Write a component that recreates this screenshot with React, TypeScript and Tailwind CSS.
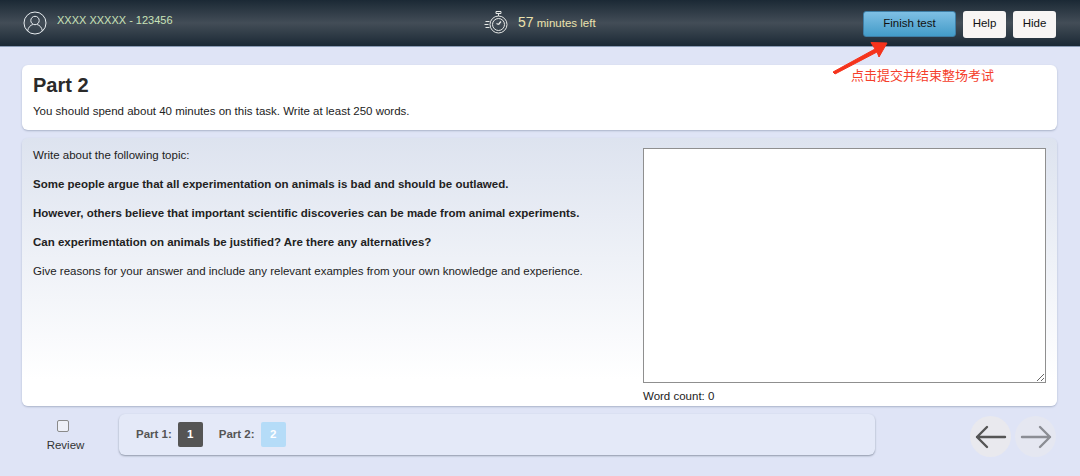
import { useState } from 'react';

const sans = 'font-["Liberation_Sans","Noto_Sans_CJK_SC",sans-serif]';

function UserIcon() {
  return (
    <svg width="24" height="24" viewBox="0 0 24 24" fill="none" stroke="#e8edf0" strokeWidth="1">
      <circle cx="12" cy="12" r="11" />
      <circle cx="12" cy="9.5" r="4.2" />
      <path d="M4.6 20c.6-3.8 3-6 5.2-6.4M19.4 20c-.6-3.8-3-6-5.2-6.4" />
    </svg>
  );
}

function TimerIcon() {
  return (
    <svg width="26" height="26" viewBox="0 0 26 26" fill="none" stroke="#e6e8e6" strokeWidth="1">
      <circle cx="14.5" cy="14.5" r="8.5" />
      <circle cx="14.5" cy="14.5" r="6" />
      <path d="M12 1.5h5V3.5h-5zM14.5 3.5V6" />
      <path d="M14.5 14.5l2.4-3M14.5 14.5l-2-1" strokeWidth="1.3" />
      <path d="M1.5 11.5h4M.5 14.5h4M1.5 17.5h4" />
    </svg>
  );
}

export default function App() {
  const [essay, setEssay] = useState('');
  const [review, setReview] = useState(false);

  return (
    <div className={`relative h-[476px] w-[1080px] overflow-hidden bg-[#dfe4f6] text-[#222] ${sans}`}>
      {/* Header */}
      <header className="flex h-[47px] items-center border-b border-[#8a9bb5] bg-[linear-gradient(#1b2935,#434d57_50%,#1b2935)] pl-[23px] pr-6">
        <div className="flex w-[461px] items-center gap-[10px] pb-[1px]">
          <UserIcon />
          <span className="mb-[5px] text-[11px] text-[#c9e2b8]">XXXX XXXXX - 123456</span>
        </div>
        <div className="flex items-center gap-[8px]">
          <TimerIcon />
          <span className="pb-[1px] text-[11.5px] text-[#ece2ae]">
            <span className="text-[14px]">57</span> minutes left
          </span>
        </div>
        <div className="ml-auto mt-[2px] flex items-center gap-[7px] text-[11.5px] text-[#111]">
          <button className="h-[26px] w-[93px] rounded-[3px] border border-[#3e7ea6] bg-[linear-gradient(#7fbfe4,#439bc8)]">
            Finish test
          </button>
          <button className="h-[27px] w-[43px] rounded-[3px] bg-[#f8f5f4]">Help</button>
          <button className="h-[27px] w-[43px] rounded-[3px] bg-[#f8f5f4]">Hide</button>
        </div>
      </header>

      {/* Annotation over the page */}
      <svg className="absolute left-[825px] top-[38px]" width="70" height="42" viewBox="0 0 70 42">
        <path d="M8 34L50 11L46 4.5L62 5L54 19L52 14L10 36Z" fill="#f5331c" stroke="#f5331c" strokeLinejoin="round" />
      </svg>
      <span className="absolute left-[851px] top-[68px] text-[13px] leading-4 text-[#f5402c]">点击提交并结束整场考试</span>

      <main className="pl-[22px] pr-[23px] pt-[18px]">
        {/* Title card */}
        <section className="h-[65px] rounded-[6px] bg-white px-[11px] pt-[8px] shadow-[0_1px_2px_#a9b2c8]">
          <h1 className="text-[20px] font-bold leading-[24px] text-[#2a2a2a]">Part 2</h1>
          <p className="mt-[7px] text-[11.5px] leading-[14px]">You should spend about 40 minutes on this task. Write at least 250 words.</p>
        </section>

        {/* Task card */}
        <section className="mt-[8px] flex h-[268px] rounded-[6px] bg-[linear-gradient(#dde3ef,#ffffff_90%)] pl-[11px] pr-[11px] pt-[10px] shadow-[0_1px_2px_#a9b2c8]">
          <div className="w-[610px] shrink-0 text-[11.5px] leading-[14px]">
            <p>Write about the following topic:</p>
            <p className="mt-[15px] font-bold">Some people argue that all experimentation on animals is bad and should be outlawed.</p>
            <p className="mt-[15px] font-bold">However, others believe that important scientific discoveries can be made from animal experiments.</p>
            <p className="mt-[15px] font-bold">Can experimentation on animals be justified? Are there any alternatives?</p>
            <p className="mt-[15px]">Give reasons for your answer and include any relevant examples from your own knowledge and experience.</p>
          </div>
          <div className="flex-1">
            <textarea
              value={essay}
              onChange={(e) => setEssay(e.target.value)}
              className="block h-[235px] w-full border border-[#8f8f8f] bg-white p-1 text-[12px] outline-none"
            />
            <p className="mt-[6px] text-[11.5px] leading-[14px]">Word count: {essay.trim() ? essay.trim().split(/\s+/).length : 0}</p>
          </div>
        </section>
      </main>

      {/* Footer nav */}
      <footer className="mt-[8px] flex items-start pl-[47px]">
        <label className="mt-[6px] flex w-[37px] flex-col items-center text-[11.5px] leading-[14px] text-[#333]">
          <input
            type="checkbox"
            checked={review}
            onChange={(e) => setReview(e.target.checked)}
            className="mr-[6px] h-[12px] w-[12px] appearance-none rounded-[2px] border border-[#8a8a8a] bg-[#eef0f8]"
          />
          <span className="mt-[6px]">Review</span>
        </label>
        <nav className="ml-[35px] flex h-[41px] w-[756px] items-center rounded-[6px] bg-[#e4e9f8] pl-[17px] text-[11.5px] font-bold text-[#555] shadow-[0_1px_2px_#8f97a8]">
          <span>Part 1:</span>
          <span className="ml-[6px] flex h-[25px] w-[25px] items-center justify-center rounded-[2px] bg-[#555] text-white">1</span>
          <span className="ml-[16px]">Part 2:</span>
          <span className="ml-[6px] flex h-[25px] w-[25px] items-center justify-center rounded-[2px] bg-[#b5dcf8] text-white">2</span>
        </nav>
        <div className="ml-[95px] mt-[2px] flex gap-[4px]">
          <button className="flex h-[41px] w-[41px] items-center justify-center rounded-full bg-[#e9e9ee]">
            <svg width="32" height="24" viewBox="0 0 32 24" fill="none" stroke="#555" strokeWidth="2.4" strokeLinecap="round" strokeLinejoin="round">
              <path d="M2 12h28M12 2L2 12l10 10" />
            </svg>
          </button>
          <button className="flex h-[41px] w-[41px] items-center justify-center rounded-full bg-[#e5e7f1]">
            <svg width="32" height="24" viewBox="0 0 32 24" fill="none" stroke="#8b8d94" strokeWidth="2.4" strokeLinecap="round" strokeLinejoin="round">
              <path d="M2 12h28M20 2l10 10-10 10" />
            </svg>
          </button>
        </div>
      </footer>
    </div>
  );
}
